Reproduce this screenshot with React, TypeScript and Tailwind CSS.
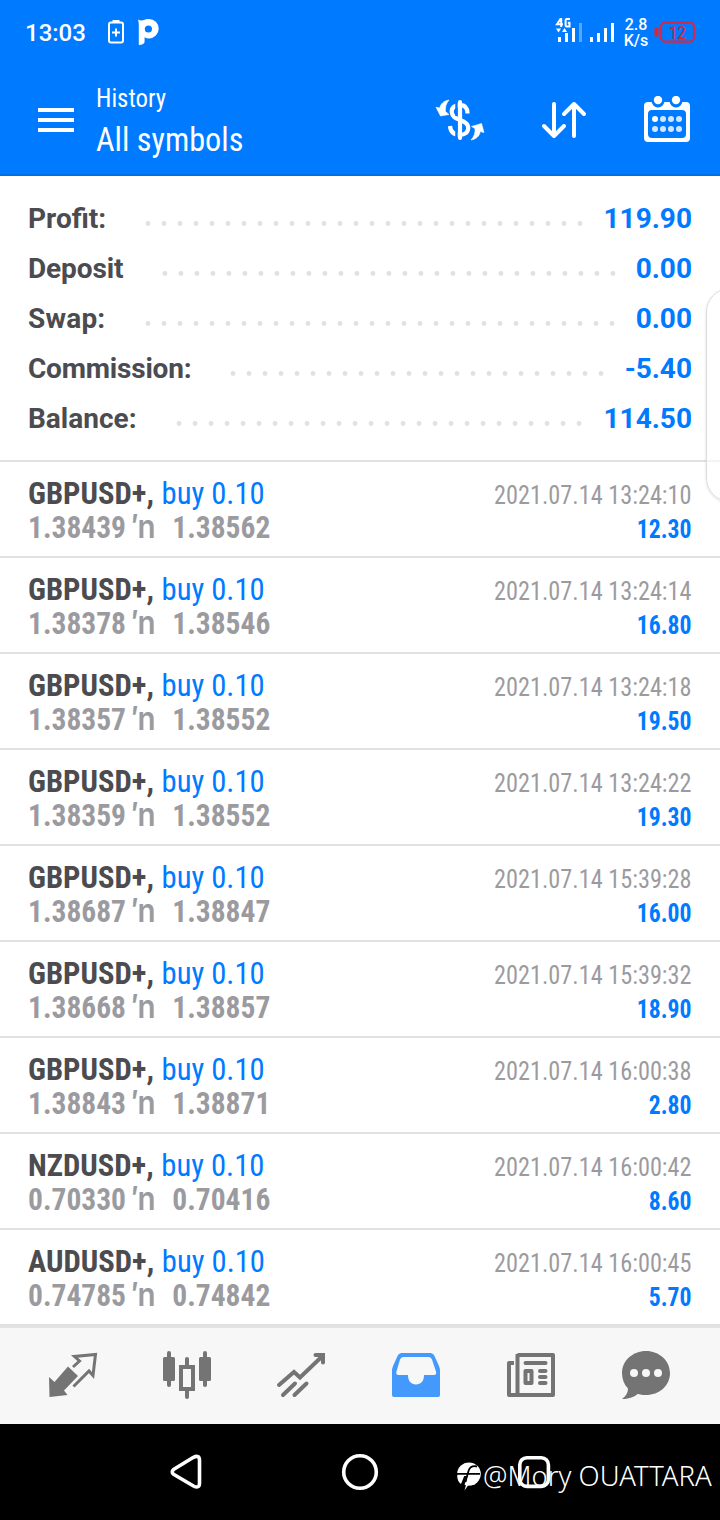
import React from "react";

const condensed =
  "font-['Roboto_Condensed','Roboto',sans-serif] [font-stretch:75%] whitespace-nowrap";

const summary = [
  { label: "Profit:", value: "119.90", dots: 28, width: "w-[112.3px]", tracking: "" },
  { label: "Deposit", value: "0.00", dots: 29, width: "w-[129.4px]", tracking: "tracking-[-0.1px]" },
  { label: "Swap:", value: "0.00", dots: 30, width: "w-[111.6px]", tracking: "tracking-[0.2px]" },
  { label: "Commission:", value: "-5.40", dots: 24, width: "w-[197.4px]", tracking: "tracking-[-0.2px]" },
  { label: "Balance:", value: "114.50", dots: 26, width: "w-[142.5px]", tracking: "" },
];

const deals = [
  ["GBPUSD+,", "1.38439", "1.38562", "13:24:10", "12.30"],
  ["GBPUSD+,", "1.38378", "1.38546", "13:24:14", "16.80"],
  ["GBPUSD+,", "1.38357", "1.38552", "13:24:18", "19.50"],
  ["GBPUSD+,", "1.38359", "1.38552", "13:24:22", "19.30"],
  ["GBPUSD+,", "1.38687", "1.38847", "15:39:28", "16.00"],
  ["GBPUSD+,", "1.38668", "1.38857", "15:39:32", "18.90"],
  ["GBPUSD+,", "1.38843", "1.38871", "16:00:38", "2.80"],
  ["NZDUSD+,", "0.70330", "0.70416", "16:00:42", "8.60"],
  ["AUDUSD+,", "0.74785", "0.74842", "16:00:45", "5.70"],
];

function StatusBar() {
  return (
    <div className="flex h-16 items-center pl-[25px] pr-6 text-white">
      <span className="w-[82px] pt-[2px] text-2xl font-medium">13:03</span>
      <svg width="18" height="26" viewBox="0 0 18 26" fill="none" stroke="#fff" strokeWidth="2">
        <rect x="2" y="3.5" width="14" height="20" rx="2" />
        <path d="M5.500 2h7M9 9.500v8M5 13.500h8" />
      </svg>
      <svg className="ml-[13px]" width="22" height="28" viewBox="0 0 22 28" fill="#fff">
        <path
          fillRule="evenodd"
          d="M0 1.5 C2 2.5 4 2.7 6 1.9 C8 1 9.5 1 11 1 A9.7 9.7 0 0 1 11 20.4 C9.5 20.4 8 20 6.6 19.2 V23.5 C6.6 25.8 4.5 27 .8 27 V6 C.6 4.5.5 3 0 1.5Z M10.4 7.4a3.6 3.6 0 1 0 0 7.2a3.6 3.6 0 0 0 0-7.2Z"
        />
      </svg>
      <div className="ml-auto flex items-center">
        <svg width="60" height="28" viewBox="555 18 60 28" fill="#fff" overflow="visible">
          <path
            d="M560.800 18.500L557 24.200H563M561.200 18V27M570 19h-3.200q-1.200 0-1.200 1.200v5q0 1.200 1.200 1.200h2.700v-3.600h-1.700"
            fill="none"
            stroke="#fff"
            strokeWidth="2"
          />
          <path d="M556 28.500h5l-2.500 4zM562 32l2.500-4 2.500 4z" />
          <rect x="558" y="37" width="3" height="5" />
          <rect x="565" y="33" width="3" height="9" />
          <rect x="572" y="28" width="3" height="14" />
          <rect x="579" y="23" width="3" height="19" opacity=".35" />
          <rect x="590" y="37" width="3" height="5" />
          <rect x="597" y="33" width="3" height="9" />
          <rect x="604" y="28" width="3" height="14" />
          <rect x="611" y="23" width="3" height="19" />
        </svg>
        <div className="ml-[6px] w-[30px] pt-px text-center text-[16px] leading-4 font-medium">
          2.8
          <br />
          K/s
        </div>
        <svg className="ml-[3px]" width="42" height="22" viewBox="655 21 42 22">
          <rect x="655.500" y="27.500" width="4" height="9" fill="#e0242f" />
          <rect x="662" y="22.600" width="33" height="19" rx="4" fill="none" stroke="#cb2b4d" strokeWidth="2.200" />
          <text x="678.500" y="39" textAnchor="middle" fontFamily="Roboto" fontSize="19" fontWeight="500" textLength="17" lengthAdjust="spacingAndGlyphs" fill="#d3263f">
            12
          </text>
        </svg>
      </div>
    </div>
  );
}

function AppBar() {
  return (
    <div className="flex h-[112px] items-center pr-[29px] pl-[38px] text-white shadow-[inset_0_-2px_0_#006fe8]">
      <div className="flex w-9 flex-col gap-[6px]">
        <i className="h-1 bg-white" />
        <i className="h-1 bg-white" />
        <i className="h-1 bg-white" />
      </div>
      <div className={`ml-[22px] flex flex-col pt-[3px] ${condensed}`}>
        <span className="origin-left scale-x-[0.955] text-[26px] leading-8">History</span>
        <span className="mt-[2px] origin-left scale-x-[0.948] text-[34px] leading-[46px]">All symbols</span>
      </div>
      <svg className="ml-auto" width="50" height="44" viewBox="435 98 50 44" fill="none" stroke="#fff">
        <path
          d="M467.500 113.500C467.500 107 464 104.800 460 104.800C454.500 104.800 451.500 108 451.700 112C452 117 456.500 118.500 460 120C465 122 468.200 123.500 468.200 128C468.200 132.500 464.500 134.800 460 134.800C454.500 134.800 450.500 132 450 126"
          strokeWidth="4.200"
        />
        <path d="M456.500 99v17M456.500 123v16" stroke="#007aff" strokeWidth="2.500" />
        <path d="M460 102v36" strokeWidth="4.200" strokeLinecap="round" />
        <path
          d="M449 100C443.500 101 440.500 104 439.800 108L436 107.200L440.500 116L449 114.500L445.500 111.500C445 107.500 446 103.500 449 100Z M471 140C476.500 139 479.500 136 480.300 131.500L484 132.500L481.500 123.500L471.500 126.500L475 128.500C475.500 132.500 474 137 471 140Z"
          fill="#fff"
          strokeWidth=".6"
          strokeLinejoin="round"
        />
      </svg>
      <svg className="ml-[56px]" width="46" height="38" viewBox="541 101 46 38" fill="none" stroke="#fff" strokeWidth="4" strokeLinecap="round" strokeLinejoin="round">
        <path d="M554 104v32M544 126l10 10 10-10M574 136v-32M564 114l10-10 10 10" />
      </svg>
      <svg className="ml-[56px]" width="48" height="48" viewBox="643 96 48 48" fill="#fff">
        <path
          fillRule="evenodd"
          d="M648 102h38q4 0 4 4v32q0 4-4 4h-38q-4 0-4-4v-32q0-4 4-4ZM652 110q-4 0-4 4v20q0 4 4 4h30q4 0 4-4v-20q0-4-4-4Z"
        />
        <path d="M651.500 101a6.500 6.500 0 0 0 13 0zM669.500 101a6.500 6.500 0 0 0 13 0z" fill="#007aff" />
        <circle cx="658" cy="100" r="4.200" />
        <circle cx="676" cy="100" r="4.200" />
        {[119, 129].map((y) =>
          [655, 663, 671, 679].map((x) => (
            <circle key={`${x}-${y}`} cx={x} cy={y} r="3" opacity={x === 655 && y === 119 ? 1 : 0.82} />
          )),
        )}
      </svg>
    </div>
  );
}

function Summary() {
  return (
    <section className="h-[286px] border-b-2 border-[#e1e1e3] pt-[18px] pr-7 pl-7">
      {summary.map((row) => (
        <div key={row.label} className="flex h-[50px] text-[28px] leading-[50px] font-bold">
          <span className={`shrink-0 whitespace-nowrap text-[#4b4b50] ${row.width} ${row.tracking}`}>{row.label}</span>
          <svg className="mt-[27px] shrink-0" width={row.dots * 16} height="5" fill="#e1e1e3">
            {Array.from({ length: row.dots }, (_, i) => (
              <circle key={i} cx={8 + i * 16} cy="2.500" r="2.400" />
            ))}
          </svg>
          <span className="ml-auto text-[#007aff]">{row.value}</span>
        </div>
      ))}
    </section>
  );
}

function Deal({ deal }: { deal: string[] }) {
  const [symbol, open, close, time, profit] = deal;
  return (
    <li className={`flex h-24 justify-between border-b-2 border-[#e1e1e3] px-7 pt-[14px] ${condensed}`}>
      <div className="text-[32px] leading-[34px]">
        <div className="flex h-[34px] origin-left scale-x-[0.957] gap-[8px]">
          <b className="text-[#4b4b50]">{symbol}</b>
          <span className="text-[#007aff]">buy 0.10</span>
        </div>
        <div className="flex h-[34px] origin-left scale-x-[0.922] text-[#9b9b9f]">
          <b className="w-[112px]">{open}</b>
          <span className="w-[44.500px] font-['Inter',sans-serif] font-semibold tracking-[-1.500px]">′n</span>
          <b>{close}</b>
        </div>
      </div>
      <div className="pt-[2px] text-right text-[26px] leading-[34px]">
        <div className="origin-right scale-x-[0.934] text-[#9b9b9f]">2021.07.14 {time}</div>
        <b className="block origin-right scale-x-[0.91] text-[#007aff]">{profit}</b>
      </div>
    </li>
  );
}

function TabBar() {
  return (
    <nav className="flex h-[98px] items-start border-t-2 border-[#e3e3e3] bg-[#f7f7f7] pt-[22px] pl-[48px] text-[#747474]">
      <svg width="50" height="50" viewBox="48 1350 50 50" fill="currentColor">
        <path d="M49 1377L54.500 1382L68 1366.500L78 1376L64 1390.500L67.500 1395L49.500 1397Z" />
        <path d="M73 1367l6.500-6-5-4.500 21-2-2.500 21-4-4.500-15.500 15.500" fill="none" stroke="currentColor" strokeWidth="3" />
      </svg>
      <svg className="ml-16" width="50" height="50" viewBox="162 1350 50 50" fill="currentColor">
        <rect x="163" y="1357" width="12" height="24" rx="1.500" />
        <rect x="167" y="1351" width="4" height="36" rx="2" />
        <rect x="199" y="1357" width="12" height="24" rx="1.500" />
        <rect x="203" y="1351" width="4" height="36" rx="2" />
        <rect x="185" y="1357" width="4" height="10" rx="2" />
        <rect x="185" y="1389" width="4" height="10" rx="2" />
        <rect x="181" y="1367" width="12" height="22" fill="none" stroke="currentColor" strokeWidth="4" />
      </svg>
      <svg className="ml-16" width="50" height="50" viewBox="276 1350 50 50" fill="none" stroke="currentColor" strokeWidth="4" strokeLinecap="round">
        <path d="M279 1385l15-13 6 5.500 23-22M283 1395l12-11.500M294.500 1395l12-11.500" />
        <path d="M315.500 1355H323v7.500" strokeLinejoin="miter" />
      </svg>
      <svg className="ml-[65px]" width="50" height="50" viewBox="391 1350 50 50" fill="#4499fd">
        <path
          fillRule="evenodd"
          d="M402 1353h28q3 0 4.500 3l4.500 10q1 2.500 1 5v24q0 2-2 2h-44q-2 0-2-2v-24q0-2.500 1-5l4.500-10q1.500-3 4.500-3ZM403 1357q-2 0-3 2.500l-3.500 12q-.8 3 1.500 3.500h10c0 6 3 9.500 8 9.500s8-3.500 8-9.500h10.500q2.300-.5 1.500-3.500l-4-12q-1-2.500-3-2.500Z"
        />
      </svg>
      <svg className="ml-[65px]" width="50" height="50" viewBox="506 1350 50 50" fill="none" stroke="currentColor" strokeWidth="4" strokeLinejoin="round">
        <path d="M517.500 1355H553v40H509v-32h5M517.500 1354v40" />
        <path d="M525.500 1363h20M540 1371h5.500M540 1377h5.500M540 1383h5.500" strokeLinecap="round" />
        <rect x="525.500" y="1371" width="6" height="12" />
      </svg>
      <svg className="ml-[65px]" width="50" height="50" viewBox="621 1350 50 50" fill="currentColor">
        <path d="M646 1351C659 1351 670 1360.500 670 1373C670 1386 659 1395 646 1395C642.500 1395 640 1394.500 637.500 1394C634 1397.500 628 1399 622 1399C626 1396 628 1392.500 628 1388.500C624 1384.500 622 1379 622 1373C622 1360.500 633 1351 646 1351Z" />
        <circle cx="634" cy="1373" r="4" fill="#f7f7f7" />
        <circle cx="646" cy="1373" r="4" fill="#f7f7f7" />
        <circle cx="658" cy="1373" r="4" fill="#f7f7f7" />
      </svg>
    </nav>
  );
}

function SystemNav() {
  return (
    <div className="relative flex h-24 items-center bg-black pl-[169px]">
      <svg width="36" height="38" viewBox="0 0 36 38" fill="none" stroke="#fff" strokeWidth="3.600" strokeLinejoin="round">
        <path d="M4.500 16.500L24.500 4.300Q30.500 1.500 30.500 7.500V30Q30.500 36 24.500 33L4.500 21.200Q2 19 4.500 16.500Z" />
      </svg>
      <svg className="ml-[136px]" width="38" height="38" viewBox="0 0 38 38" fill="none" stroke="#fff" strokeWidth="3.600">
        <circle cx="19" cy="19" r="16.300" />
      </svg>
      <svg className="ml-[137px]" width="36" height="36" viewBox="0 0 36 36" fill="none" stroke="#fff" strokeWidth="3.600">
        <rect x="3.800" y="3.800" width="28.600" height="28.600" rx="7" />
      </svg>
      <div className="absolute top-[34px] left-[456px] flex items-center text-white">
        <svg width="25" height="32" viewBox="456 1462 25 32">
          <ellipse cx="469" cy="1476" rx="11.800" ry="11.500" fill="#fff" />
          <path d="M455 1478h12.500l-5.500 16h-7z" fill="#000" />
          <path d="M457.200 1478h7l-3.200 8q-3.800-3-3.800-8z" fill="#fff" />
          <path
            d="M457 1475.800H480M465.500 1484L468.500 1473Q470.500 1467 477 1468.500"
            fill="none"
            stroke="#000"
            strokeWidth="1.800"
          />
          <path d="M468.500 1477.500h9l-2.500 9-7 1-3.500 5z" fill="#fff" />
        </svg>
        <span className="ml-[2px] origin-left font-['Noto_Sans',sans-serif] text-[27.500px] leading-[36px] font-light whitespace-nowrap">
          @Mory OUATTARA
        </span>
      </div>
    </div>
  );
}

export default function App() {
  return (
    <div className="relative flex h-[1520px] w-[720px] flex-col overflow-hidden bg-white font-['Roboto',sans-serif]">
      <header className="h-44 shrink-0 bg-[#007aff]">
        <StatusBar />
        <AppBar />
      </header>
      <Summary />
      <ul>
        {deals.map((deal) => (
          <Deal key={deal[3]} deal={deal} />
        ))}
      </ul>
      <TabBar />
      <SystemNav />
      <div className="absolute top-[288px] -right-9 h-[214px] w-[50px] rounded-[24px] border-[1.500px] border-[#dcdcdc] bg-white/60 shadow-[0_1px_3px_rgba(0,0,0,0.12)]" />
    </div>
  );
}
